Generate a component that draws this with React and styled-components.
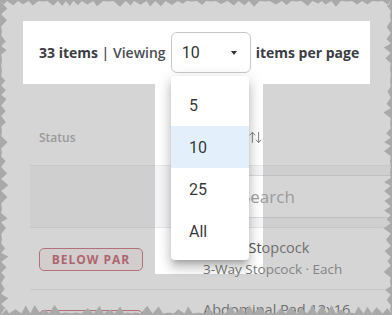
import React from 'react';
import styled, { createGlobalStyle } from 'styled-components';
import { ArrowUpDown, Search } from 'lucide-react';

const GlobalStyle = createGlobalStyle`
  html, body {
    margin: 0;
    padding: 0;
    background: #fff;
  }
  body {
    font-family: "Open Sans", "Liberation Sans", sans-serif;
  }
`;

const Frame = styled.div`
  position: relative;
  width: 392px;
  height: 315px;
  overflow: hidden;
  background: #fff;
`;

const Page = styled.div`
  padding-top: 21px;
`;

const PagerBar = styled.div`
  margin: 0 22px 0 23px;
  height: 63px;
  display: flex;
  align-items: center;
  padding-left: 16px;
  font-size: 14px;
  color: #3d4047;
  white-space: nowrap;
`;

const Label = styled.span`
  font-weight: ${(p) => (p.$bold ? 700 : 600)};
  color: ${(p) => (p.$bold ? '#3a3d44' : '#4a4d54')};
`;

const SelectBox = styled.div`
  box-sizing: border-box;
  width: 80px;
  height: 41px;
  margin: 0 5px;
  padding: 0 13px 0 10px;
  display: flex;
  align-items: center;
  justify-content: space-between;
  border: 1px solid #c8c8c8;
  border-radius: 6px;
  font-family: Roboto, "Liberation Sans", sans-serif;
  font-size: 16px;
  color: #333;
`;

const Caret = styled.span`
  width: 0;
  height: 0;
  border-left: 3.5px solid transparent;
  border-right: 3.5px solid transparent;
  border-top: 4px solid #333;
`;

const Table = styled.div`
  margin-left: 30px;
  width: 380px;
`;

const Row = styled.div`
  box-sizing: border-box;
  display: grid;
  grid-template-columns: 164px 1fr;
  height: ${(p) => p.$h}px;
`;

const HeaderRow = styled(Row)`
  align-items: end;
  padding-bottom: 19px;
`;

const HeaderCell = styled.div`
  padding: 0 9px;
  display: flex;
  align-items: center;
  font-size: 12px;
  font-weight: 600;
  color: #9b9b9b;
`;

const SortIcon = styled(ArrowUpDown)`
  margin-left: 18px;
  color: #777;
`;

const FilterRow = styled(Row)`
  align-items: center;
  background: #f5f5f7;
  border-top: 1px solid #e9e9ec;
  border-bottom: 1px solid #e6e6e9;
`;

const SearchBox = styled.div`
  box-sizing: border-box;
  height: 43px;
  margin-left: 9px;
  padding-left: 12px;
  display: flex;
  align-items: center;
  gap: 9px;
  background: #fff;
  border: 1px solid #dcdcdf;
  font-size: 17px;
  color: #a0a0a0;
`;

const DataRow = styled(Row)`
  align-items: center;
  border-bottom: 1px solid #e6e6e6;
`;

const Cell = styled.div`
  padding: 0 9px;
`;

const Badge = styled.span`
  box-sizing: border-box;
  display: inline-flex;
  align-items: center;
  justify-content: center;
  width: 104px;
  height: 23px;
  border: 1px solid #c25a64;
  border-radius: 5px;
  background: #fdf2f3;
  color: #bb4652;
  font-size: 12px;
  font-weight: 700;
  letter-spacing: 1px;
`;

const Title = styled.div`
  font-size: 14.5px;
  line-height: 20px;
  color: #555;
`;

const Sub = styled.div`
  margin-top: 1px;
  font-size: 13.5px;
  line-height: 20px;
  color: #777;
`;

const Dim = styled.svg`
  position: absolute;
  inset: 0;
  pointer-events: none;
`;

const Menu = styled.ul`
  position: absolute;
  left: 171px;
  top: 76px;
  width: 78px;
  margin: 0;
  padding: 8px 0;
  list-style: none;
  background: #fff;
  border-radius: 4px;
  box-shadow: 0 5px 5px -3px rgba(0, 0, 0, 0.2), 0 8px 10px 1px rgba(0, 0, 0, 0.14),
    0 3px 14px 2px rgba(0, 0, 0, 0.12);
`;

const MenuItem = styled.li`
  height: 42px;
  padding-left: 18px;
  display: flex;
  align-items: center;
  font-family: Roboto, "Liberation Sans", sans-serif;
  font-size: 16px;
  color: rgba(0, 0, 0, 0.8);
  background: ${(p) => (p.$selected ? '#e3f0fc' : 'transparent')};
`;

const Edge = styled.svg`
  position: absolute;
  inset: 0;
  pointer-events: none;
`;

const W = 392;
const H = 315;

const spotlight = 'M23 21H370V84H263V274H155V84H23Z';

// torn paper border, deterministic zigzag
function tornPath() {
  let s = 11;
  const rnd = () => {
    s = (s * 16807) % 2147483647;
    return (s - 1) / 2147483646;
  };
  const pts = [];
  const side = (len, at) => {
    let t = 0;
    let peak = false;
    while (t < len) {
      const depth = peak ? (rnd() < 0.2 ? 2 : 4.5 + rnd() * 4) : 1.2;
      pts.push(at(t, depth));
      t += 3.5 + rnd() * 3;
      peak = !peak;
    }
  };
  side(W, (t, d) => [t, d * 0.8]);
  side(H, (t, d) => [W - d, t]);
  side(W, (t, d) => [W - t, H - d * 1.2]);
  side(H, (t, d) => [d, H - t]);
  return 'M0 0H392V315H0Z M' + pts.map((p) => p.map((v) => v.toFixed(1)).join(' ')).join('L') + 'Z';
}

const edgePath = tornPath();

const rows = [
  { status: 'BELOW PAR', title: '3-Way Stopcock', sub: '3-Way Stopcock · Each' },
  { status: 'BELOW PAR', title: 'Abdominal Pad 12x16', sub: 'Abdominal Pad · Each' },
];

const App = () => {
  return (
    <Frame>
      <GlobalStyle />
      <Page>
        <PagerBar>
          <Label $bold>33 items</Label>
          <Label>&nbsp;| Viewing</Label>
          <SelectBox>
            <span>10</span>
            <Caret />
          </SelectBox>
          <Label $bold>items per page</Label>
        </PagerBar>
        <Table>
          <HeaderRow $h={81}>
            <HeaderCell>Status</HeaderCell>
            <HeaderCell>
              Item
              <SortIcon size={15} strokeWidth={1.5} />
            </HeaderCell>
          </HeaderRow>
          <FilterRow $h={63}>
            <div />
            <SearchBox>
              <Search size={16} strokeWidth={1.8} color="#999" />
              Search
            </SearchBox>
          </FilterRow>
          {rows.map((r, i) => (
            <DataRow key={i} $h={62}>
              <Cell>
                <Badge>{r.status}</Badge>
              </Cell>
              <Cell>
                <Title>{r.title}</Title>
                <Sub>{r.sub}</Sub>
              </Cell>
            </DataRow>
          ))}
        </Table>
      </Page>
      <Dim width={W} height={H} viewBox={`0 0 ${W} ${H}`}>
        <path d={`M0 0H${W}V${H}H0Z ${spotlight}`} fill="rgba(150,150,150,0.4)" fillRule="evenodd" />
      </Dim>
      <Menu>
        {['5', '10', '25', 'All'].map((v) => (
          <MenuItem key={v} $selected={v === '10'}>
            {v}
          </MenuItem>
        ))}
      </Menu>
      <Edge width={W} height={H} viewBox={`0 0 ${W} ${H}`}>
        <path d={edgePath} fill="#a9a9a9" fillRule="evenodd" />
      </Edge>
    </Frame>
  );
};

export default App;
